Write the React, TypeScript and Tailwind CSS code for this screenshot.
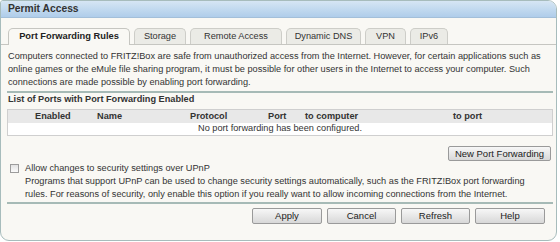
import React from 'react';

const tabs = [
  { label: 'Port Forwarding Rules', w: 'w-[122px]' },
  { label: 'Storage', w: 'w-[52px]' },
  { label: 'Remote Access', w: 'w-[92px]' },
  { label: 'Dynamic DNS', w: 'w-[75px]' },
  { label: 'VPN', w: 'w-[41px]' },
  { label: 'IPv6', w: 'w-[38px]' },
];

function Btn({ label, className = '' }: { label: string; className?: string }) {
  return (
    <button
      className={`h-[16px] rounded-[2px] border border-[#9a9a9a] bg-gradient-to-b from-[#f7f7f7] to-[#d8d8d8] text-[9.5px] leading-none text-[#222] ${className}`}
    >
      {label}
    </button>
  );
}

export default function App() {
  return (
    <div className="w-[560px] h-[242px] bg-white font-['Liberation_Sans',Arial,sans-serif] text-[9.2px] text-[#333]">
      <div className="w-[557px] h-[241px] rounded-tr-[9px] rounded-b-[9px] rounded-tl-[3px] border border-[#a7bcbc] bg-[#f9f8f4] overflow-hidden">
        <div className="h-[17px] bg-gradient-to-b from-[#d6e6f4] to-[#afcdea] border-b border-[#a3bfd9] pl-[7px] flex items-center text-[10.3px] font-bold text-[#333]">
          Permit Access
        </div>

        <div className="flex items-end gap-[4px] pl-[7px] pt-[10px] border-b border-[#c6c6c1]">
          {tabs.map((t, i) =>
            i === 0 ? (
              <div
                key={t.label}
                className={`${t.w} h-[17px] rounded-t-[5px] border border-b-0 border-[#c6c6c1] bg-[#f9f8f4] -mb-px text-[9.3px] font-bold flex items-center justify-center text-[#222]`}
              >
                {t.label}
              </div>
            ) : (
              <div
                key={t.label}
                className={`${t.w} h-[16px] rounded-t-[5px] border border-b-0 border-[#cdcdc8] bg-[#ebebe6] flex items-center justify-center text-[#333]`}
              >
                {t.label}
              </div>
            )
          )}
        </div>

        <div className="pl-[6px] pr-[3px]">
          <p className="pt-[5px] pl-[1px] leading-[13px] whitespace-nowrap">
            Computers connected to FRITZ!Box are safe from unauthorized access from the Internet. However, for certain applications such as
            <br />
            online games or the eMule file sharing program, it must be possible for other users in the Internet to access your computer. Such
            <br />
            connections are made possible by enabling port forwarding.
          </p>

          <div className="mt-[2px] border-t-2 border-[#a6bab6] pt-[1px] pl-[1px] leading-[11px] font-bold">
            List of Ports with Port Forwarding Enabled
          </div>

          <div className="mt-[4px] border border-[#cfcfcf] bg-white">
            <div className="flex h-[13px] items-center bg-[#e8e8e8] font-bold text-[#333]">
              <span className="w-[89px] pl-[27px]">Enabled</span>
              <span className="w-[93px]">Name</span>
              <span className="w-[78px]">Protocol</span>
              <span className="w-[37px]">Port</span>
              <span className="w-[148px]">to computer</span>
              <span>to port</span>
            </div>
            <div className="h-[12px] flex items-center justify-center">
              No port forwarding has been configured.
            </div>
          </div>

          <div className="flex justify-end mt-[10px]">
            <Btn label="New Port Forwarding" className="w-[103px] !h-[15px] mr-[2px]" />
          </div>

          <div className="flex items-start gap-[6px] mt-[1px] leading-[13px] whitespace-nowrap">
            <span className="mt-[2px] ml-[3px] w-[9px] h-[9px] border border-[#9c9c9c] bg-gradient-to-b from-[#e2e2e2] to-[#fbfbfb] shrink-0" />
            <div>
              <div>Allow changes to security settings over UPnP</div>
              <div>
                Programs that support UPnP can be used to change security settings automatically, such as the FRITZ!Box port forwarding
              </div>
              <div>
                rules. For reasons of security, only enable this option if you really want to allow incoming connections from the Internet.
              </div>
            </div>
          </div>

          <div className="mt-[1px] border-t-2 border-[#a6bab6] pt-[4px] pr-[8px] flex justify-end gap-[5px]">
            <Btn label="Apply" className="w-[70px]" />
            <Btn label="Cancel" className="w-[69px]" />
            <Btn label="Refresh" className="w-[69px]" />
            <Btn label="Help" className="w-[70px]" />
          </div>
        </div>
      </div>
    </div>
  );
}
